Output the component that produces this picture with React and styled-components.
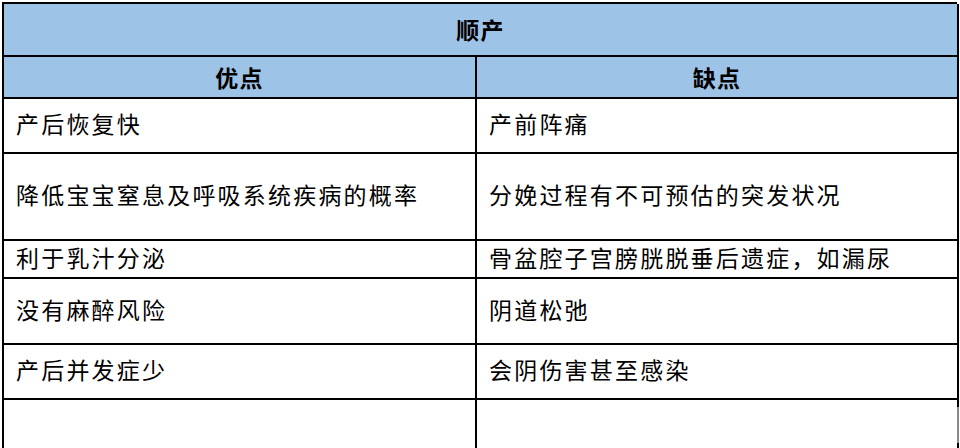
import React from 'react'
import styled, { createGlobalStyle } from 'styled-components'

const Global = createGlobalStyle`
  html, body {
    margin: 0;
    background: #fff;
    overflow: hidden;
  }
  body {
    font-family: "Noto Sans CJK SC", "DejaVu Sans", sans-serif;
    color: #000;
  }
`

const Page = styled.div`
  position: relative;
  width: 960px;
  height: 448px;
  padding: 2px 0 0 2px;
  box-sizing: border-box;
`

const Table = styled.div`
  width: 955px;
  display: grid;
  grid-template-columns: 473px 482px;
  grid-template-rows: 53px 42px 55px 87px 38px 66px 55px 60px;
  border-top: 2px solid #000;
  border-left: 2px solid #000;
  box-sizing: border-box;
`

const Cell = styled.div`
  box-sizing: border-box;
  border-right: 2px solid #000;
  border-bottom: 2px solid #000;
  display: flex;
  align-items: center;
  justify-content: ${p => (p.$head ? 'center' : 'flex-start')};
  padding: 0 0 ${p => (p.$head ? 1 : 5)}px ${p => (p.$head ? 0 : 12)}px;
  background: ${p => (p.$head ? '#9dc3e6' : '#fff')};
  font-size: 23px;
  letter-spacing: ${p => (p.$head ? 1.2 : 2.2)}px;
  font-weight: ${p => (p.$head ? 700 : 400)};
  grid-column: ${p => (p.$span ? '1 / span 2' : 'auto')};
  white-space: nowrap;
`

const Scroll = styled.div`
  position: absolute;
  right: 1px;
  top: 407px;
  width: 2px;
  height: 36px;
  background: #8a8a8a;
`

const rows = [
  ['产后恢复快', '产前阵痛'],
  ['降低宝宝窒息及呼吸系统疾病的概率', '分娩过程有不可预估的突发状况'],
  ['利于乳汁分泌', '骨盆腔子宫膀胱脱垂后遗症，如漏尿'],
  ['没有麻醉风险', '阴道松弛'],
  ['产后并发症少', '会阴伤害甚至感染'],
  ['', ''],
]

export default function App() {
  return (
    <Page>
      <Global />
      <Table>
        <Cell $head $span>顺产</Cell>
        <Cell $head>优点</Cell>
        <Cell $head>缺点</Cell>
        {rows.map((r, i) => (
          <React.Fragment key={i}>
            <Cell>{r[0]}</Cell>
            <Cell>{r[1]}</Cell>
          </React.Fragment>
        ))}
      </Table>
      <Scroll />
    </Page>
  )
}
